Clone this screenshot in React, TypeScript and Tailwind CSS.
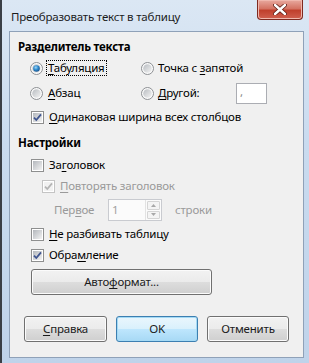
const font = { fontFamily: '"Noto Sans", "Open Sans", sans-serif' };

const Radio = ({ on }: { on?: boolean }) => (
  <svg width="13" height="13" viewBox="0 0 13 13" className="shrink-0">
    <defs>
      <linearGradient id="rg" x1="0" y1="0" x2="1" y2="1">
        <stop offset="0" stopColor="#b8bcc1" />
        <stop offset="1" stopColor="#f4f4f4" />
      </linearGradient>
      <radialGradient id="rd" cx="0.4" cy="0.35" r="0.7">
        <stop offset="0" stopColor="#9fd6f7" />
        <stop offset="0.5" stopColor="#2c8ace" />
        <stop offset="1" stopColor="#1b4f86" />
      </radialGradient>
    </defs>
    <circle cx="6.5" cy="6.5" r="6" fill="#fafafa" stroke="#8c8f93" />
    <circle cx="6.5" cy="6.5" r="4.3" fill="url(#rg)" />
    {on && <circle cx="6.5" cy="6.5" r="3.3" fill="url(#rd)" />}
  </svg>
);

const Check = ({ on, disabled }: { on?: boolean; disabled?: boolean }) => (
  <svg width="13" height="13" viewBox="0 0 13 13" className="shrink-0">
    <defs>
      <linearGradient id="cg" x1="0" y1="0" x2="1" y2="1">
        <stop offset="0" stopColor="#b3b7bc" />
        <stop offset="1" stopColor="#f3f3f3" />
      </linearGradient>
    </defs>
    <rect x="0.5" y="0.5" width="12" height="12" fill="#fff" stroke={disabled ? "#c4c4c4" : "#8e8f8f"} />
    <rect x="2" y="2" width="9" height="9" fill={disabled ? "#f2f2f2" : "url(#cg)"} />
    {on && (
      <path
        d="M3 6.6 L5.3 9 L10 3.4"
        fill="none"
        stroke={disabled ? "#b5b5b5" : "#3f558f"}
        strokeWidth="1.8"
      />
    )}
  </svg>
);

const Btn = ({ children, w, def }: { children: React.ReactNode; w: string; def?: boolean }) => (
  <div
    className={`${w} h-[26px] rounded-[3px] border flex items-center justify-center text-[#1b1b1b] ${
      def
        ? "border-[#3c7fb1] shadow-[inset_0_0_0_1px_#a4daf5] bg-[linear-gradient(#eaf6fd_0%,#d9f0fc_50%,#bee6fd_51%,#a7d9f5_100%)]"
        : "border-[#707070] shadow-[inset_0_0_0_1px_#fbfbfb] bg-[linear-gradient(#f2f2f2_0%,#ebebeb_50%,#dddddd_51%,#cfcfcf_100%)]"
    }`}
  >
    {children}
  </div>
);

export default function App() {
  return (
    <div
      style={font}
      className="w-[309px] h-[363px] flex flex-col bg-[linear-gradient(#dbe7f4,#c9dbef_40%,#bfd3ea)] border-l-2 border-l-[#3a3f46] text-[11.5px] tracking-[-0.2px] text-black"
    >
      <div className="h-[31px] flex items-start justify-between">
        <span className="mt-[8px] ml-[9px] text-[#1c1c1c]">Преобразовать текст в таблицу</span>
        <div className="mr-[6px] w-[46px] h-[20px] rounded-b-[4px] border border-t-0 border-[#7f2a20] bg-[linear-gradient(#e8a99f_0%,#d47363_45%,#c0402d_55%,#d0604f_100%)] flex items-center justify-center shadow-[inset_0_0_0_1px_#f0b8ae]">
          <svg width="14" height="11" viewBox="0 0 14 11">
            <path d="M2 1 L12 10 M12 1 L2 10" stroke="#5a1a12" strokeWidth="4" strokeLinecap="round" />
            <path d="M2 1 L12 10 M12 1 L2 10" stroke="#ffffff" strokeWidth="2.4" strokeLinecap="round" />
          </svg>
        </div>
      </div>

      <div className="ml-[7px] w-[295px] h-[327px] border border-[#8fa1b8] bg-[#f0f0f0] flex flex-col">
        <div className="mt-[7px] h-[16px] pl-[8px] flex items-center font-bold">Разделитель текста</div>

        <div className="mt-[4px] h-[18px] pl-[20px] flex items-center">
          <div className="w-[111px] flex items-center gap-[5px]">
            <Radio on />
            <span className="outline-1 outline-dotted outline-black leading-[14px] px-[1px] -ml-[1px]">
              <u className="underline-offset-2">Т</u>абуляция
            </span>
          </div>
          <div className="flex items-center gap-[4px]">
            <Radio />
            <span>
              Точка с <u className="underline-offset-2">з</u>апятой
            </span>
          </div>
        </div>

        <div className="mt-[5px] h-[22px] pl-[20px] flex items-center">
          <div className="w-[111px] flex items-center gap-[5px]">
            <Radio />
            <span>
              <u className="underline-offset-2">А</u>бзац
            </span>
          </div>
          <div className="w-[95px] flex items-center gap-[4px]">
            <Radio />
            <span>
              <u className="underline-offset-2">Д</u>ругой:
            </span>
          </div>
          <div className="w-[31px] h-[21px] border border-[#abadb3] bg-white pl-[3px] text-[#8a8a8a] leading-[16px]">,</div>
        </div>

        <div className="mt-[4px] h-[18px] pl-[21px] flex items-center gap-[5px]">
          <Check on />
          <span>
            <u className="underline-offset-2">О</u>динаковая ширина всех столбцов
          </span>
        </div>

        <div className="mt-[9px] h-[16px] pl-[8px] flex items-center font-bold">Настройки</div>

        <div className="mt-[5px] h-[18px] pl-[21px] flex items-center gap-[5px]">
          <Check />
          <span>
            За<u className="underline-offset-2">г</u>оловок
          </span>
        </div>

        <div className="mt-[3px] h-[18px] pl-[32px] flex items-center gap-[5px] text-[#9a9a9a]">
          <Check on disabled />
          <span>
            <u className="underline-offset-2">П</u>овторять заголовок
          </span>
        </div>

        <div className="mt-[4px] h-[22px] pl-[44px] flex items-center text-[#9a9a9a]">
          <span className="w-[54px]">
            Пер<u className="underline-offset-2">в</u>ое
          </span>
          <div className="w-[54px] h-[22px] border border-[#c9cbd0] bg-[#fbfbfb] flex items-stretch">
            <span className="flex-1 pl-[3px] leading-[20px] text-[#a0a0a0]">1</span>
            <div className="w-[16px] flex flex-col border-l border-[#e3e3e3] p-[1px] gap-[1px]">
              <div className="flex-1 border border-[#d5d5d5] rounded-[1px] flex items-center justify-center bg-[#f4f4f4]">
                <svg width="5" height="3" viewBox="0 0 5 3">
                  <path d="M0 3 L2.5 0 L5 3 Z" fill="#a8a8a8" />
                </svg>
              </div>
              <div className="flex-1 border border-[#d5d5d5] rounded-[1px] flex items-center justify-center bg-[#f4f4f4]">
                <svg width="5" height="3" viewBox="0 0 5 3">
                  <path d="M0 0 L2.5 3 L5 0 Z" fill="#a8a8a8" />
                </svg>
              </div>
            </div>
          </div>
          <span className="ml-[13px]">строки</span>
        </div>

        <div className="mt-[4px] h-[18px] pl-[21px] flex items-center gap-[5px]">
          <Check />
          <span>
            <u className="underline-offset-2">Н</u>е разбивать таблицу
          </span>
        </div>

        <div className="mt-[3px] h-[18px] pl-[21px] flex items-center gap-[5px]">
          <Check on />
          <span>
            Обра<u className="underline-offset-2">м</u>ление
          </span>
        </div>

        <div className="mt-[5px] pl-[21px]">
          <Btn w="w-[181px]">
            <span>
              Авто<u className="underline-offset-2">ф</u>ормат...
            </span>
          </Btn>
        </div>

        <div className="mt-[21px] pl-[14px] flex gap-[9px]">
          <Btn w="w-[83px]">
            <span>
              <u className="underline-offset-2">С</u>правка
            </span>
          </Btn>
          <Btn w="w-[82px]" def>
            OK
          </Btn>
          <Btn w="w-[82px]">Отменить</Btn>
        </div>
      </div>
    </div>
  );
}
